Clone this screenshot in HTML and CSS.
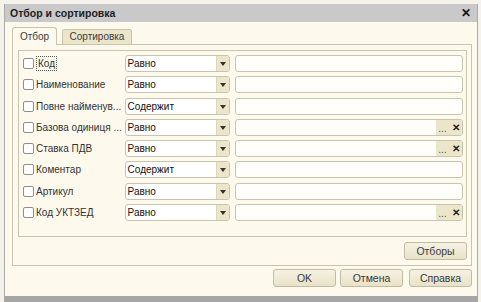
FILE: index.html
```html
<!DOCTYPE html>
<html lang="ru">
  <head>
    <meta charset="UTF-8" />
    <title>Отбор и сортировка</title>
    <link rel="stylesheet" href="styles.css">
  </head>
  <body>
    <div class="window">
      <div class="titlebar">
        <span>Отбор и сортировка</span>
        <span class="close">✕</span>
      </div>

      <div class="content">
        <div class="tabs">
          <div class="tab active">Отбор</div>
          <div class="tab">Сортировка</div>
        </div>

        <div class="panel">
          <div class="frame">
            <div class="row">
              <span class="check"></span><span class="label"><span class="focus">Код</span></span>
              <div class="combo"><span>Равно</span><i class="drop"></i></div>
              <div class="field"></div>
            </div>
            <div class="row">
              <span class="check"></span><span class="label">Наименование</span>
              <div class="combo"><span>Равно</span><i class="drop"></i></div>
              <div class="field"></div>
            </div>
            <div class="row">
              <span class="check"></span><span class="label">Повне найменув...</span>
              <div class="combo"><span>Содержит</span><i class="drop"></i></div>
              <div class="field"></div>
            </div>
            <div class="row">
              <span class="check"></span><span class="label">Базова одиниця ...</span>
              <div class="combo"><span>Равно</span><i class="drop"></i></div>
              <div class="field"><b class="mini dots">...</b><b class="mini clear">✕</b></div>
            </div>
            <div class="row">
              <span class="check"></span><span class="label">Ставка ПДВ</span>
              <div class="combo"><span>Равно</span><i class="drop"></i></div>
              <div class="field"><b class="mini dots">...</b><b class="mini clear">✕</b></div>
            </div>
            <div class="row">
              <span class="check"></span><span class="label">Коментар</span>
              <div class="combo"><span>Содержит</span><i class="drop"></i></div>
              <div class="field"></div>
            </div>
            <div class="row">
              <span class="check"></span><span class="label">Артикул</span>
              <div class="combo"><span>Равно</span><i class="drop"></i></div>
              <div class="field"></div>
            </div>
            <div class="row">
              <span class="check"></span><span class="label">Код УКТЗЕД</span>
              <div class="combo"><span>Равно</span><i class="drop"></i></div>
              <div class="field"><b class="mini dots">...</b><b class="mini clear">✕</b></div>
            </div>
          </div>
          <div class="panel-foot">
            <button class="btn">Отборы</button>
          </div>
        </div>

        <div class="buttons">
          <button class="btn">OK</button>
          <button class="btn">Отмена</button>
          <button class="btn wide-gap">Справка</button>
        </div>
      </div>
    </div>
  </body>
</html>
```

FILE: styles.css
```css
:root {
  --bg: #fdf9ed;
  --line: #c9c4ad;
  --beige: #ece5ca;
  --text: #2a2a2a;
}
* {
  box-sizing: border-box;
}
body {
  margin: 0;
  width: 481px;
  height: 302px;
  overflow: hidden;
  background: #f4f2ea;
  font-family: "Liberation Sans", Arial, sans-serif;
  font-size: 10px;
  color: var(--text);
}
.window {
  margin: 4px 3px 0 4px;
  height: 298px;
  background: var(--bg);
  border-left: 1px solid #ababab;
  border-right: 1px solid #ababab;
  border-bottom: 6px solid #a6a6a6;
  display: flex;
  flex-direction: column;
}

/* ---------- Title ---------- */
.titlebar {
  height: 18px;
  background: #c9c9c9;
  display: flex;
  align-items: center;
  justify-content: space-between;
  padding: 0 6px 0 5px;
  font-weight: 700;
  font-size: 10.5px;
  color: #1e1e1e;
}
.close {
  font-size: 12px;
  font-weight: 700;
  color: #111;
}

/* ---------- Tabs ---------- */
.content {
  padding: 5px 5px 0 7px;
}
.tabs {
  display: flex;
  align-items: flex-end;
  height: 17px;
  gap: 5px;
}
.tab {
  height: 15px;
  width: 70px;
  text-align: center;
  line-height: 14px;
  background: var(--beige);
  border: 1px solid var(--line);
  border-bottom: none;
  border-radius: 3px 3px 0 0;
  color: #3a3a3a;
}
.tab.active {
  width: 45px;
  height: 18px;
  margin-bottom: -1px;
  line-height: 17px;
  background: var(--bg);
}

/* ---------- Panel ---------- */
.panel {
  height: 222px;
  border: 1px solid var(--line);
  padding: 5px 4px 5px 5px;
}
.frame {
  height: 187px;
  border: 1px solid var(--line);
  padding: 4px 3px 0 4px;
  display: flex;
  flex-direction: column;
  gap: 4.3px;
}
.row {
  height: 17px;
  display: flex;
  align-items: center;
}
.check {
  width: 11px;
  height: 11px;
  border: 1px solid #8f8f8f;
  border-radius: 2px;
  background: #fff;
  flex: none;
}
.label {
  width: 89px;
  margin-left: 2px;
  white-space: nowrap;
  overflow: hidden;
  line-height: 15px;
  color: #333;
}
.focus {
  display: inline-block;
  padding: 0 1px;
  line-height: 13px;
  border: 1px dotted #555;
}
.combo {
  width: 106px;
  height: 17px;
  border: 1px solid var(--line);
  border-radius: 3px;
  background: #fff;
  display: flex;
  align-items: center;
  justify-content: space-between;
  padding-left: 2px;
  color: #111;
}
.drop {
  width: 13px;
  height: 15px;
  background: var(--beige);
  border-left: 1px solid #ddd6bb;
  border-radius: 0 2px 2px 0;
  position: relative;
}
.drop::after {
  content: "";
  position: absolute;
  left: 3px;
  top: 6px;
  border-left: 3.5px solid transparent;
  border-right: 3.5px solid transparent;
  border-top: 4px solid #333;
}
.field {
  margin-left: 5px;
  width: 229px;
  height: 17px;
  border: 1px solid var(--line);
  border-radius: 3px;
  background: #fffefb;
  display: flex;
  justify-content: flex-end;
}
.mini {
  width: 13px;
  height: 15px;
  background: var(--beige);
  display: flex;
  align-items: center;
  justify-content: center;
  font-size: 10px;
}
.dots {
  font-weight: 400;
  color: #555;
  align-items: flex-end;
  line-height: 12px;
}
.clear {
  font-weight: 700;
  color: #222;
  border-radius: 0 2px 2px 0;
}

/* ---------- Buttons ---------- */
.panel-foot {
  display: flex;
  justify-content: flex-end;
  margin-top: 5px;
}
.btn {
  width: 63px;
  height: 18px;
  padding: 0;
  font-family: inherit;
  font-size: 10.5px;
  color: #3a3a3a;
  border: 1px solid #c3bca2;
  border-radius: 3px;
  background: linear-gradient(#f6f2e4, #e9e2c8);
}
.buttons {
  display: flex;
  justify-content: flex-end;
  gap: 4px;
  margin-top: 3px;
}
.buttons .wide-gap {
  margin-left: 2px;
}
```
